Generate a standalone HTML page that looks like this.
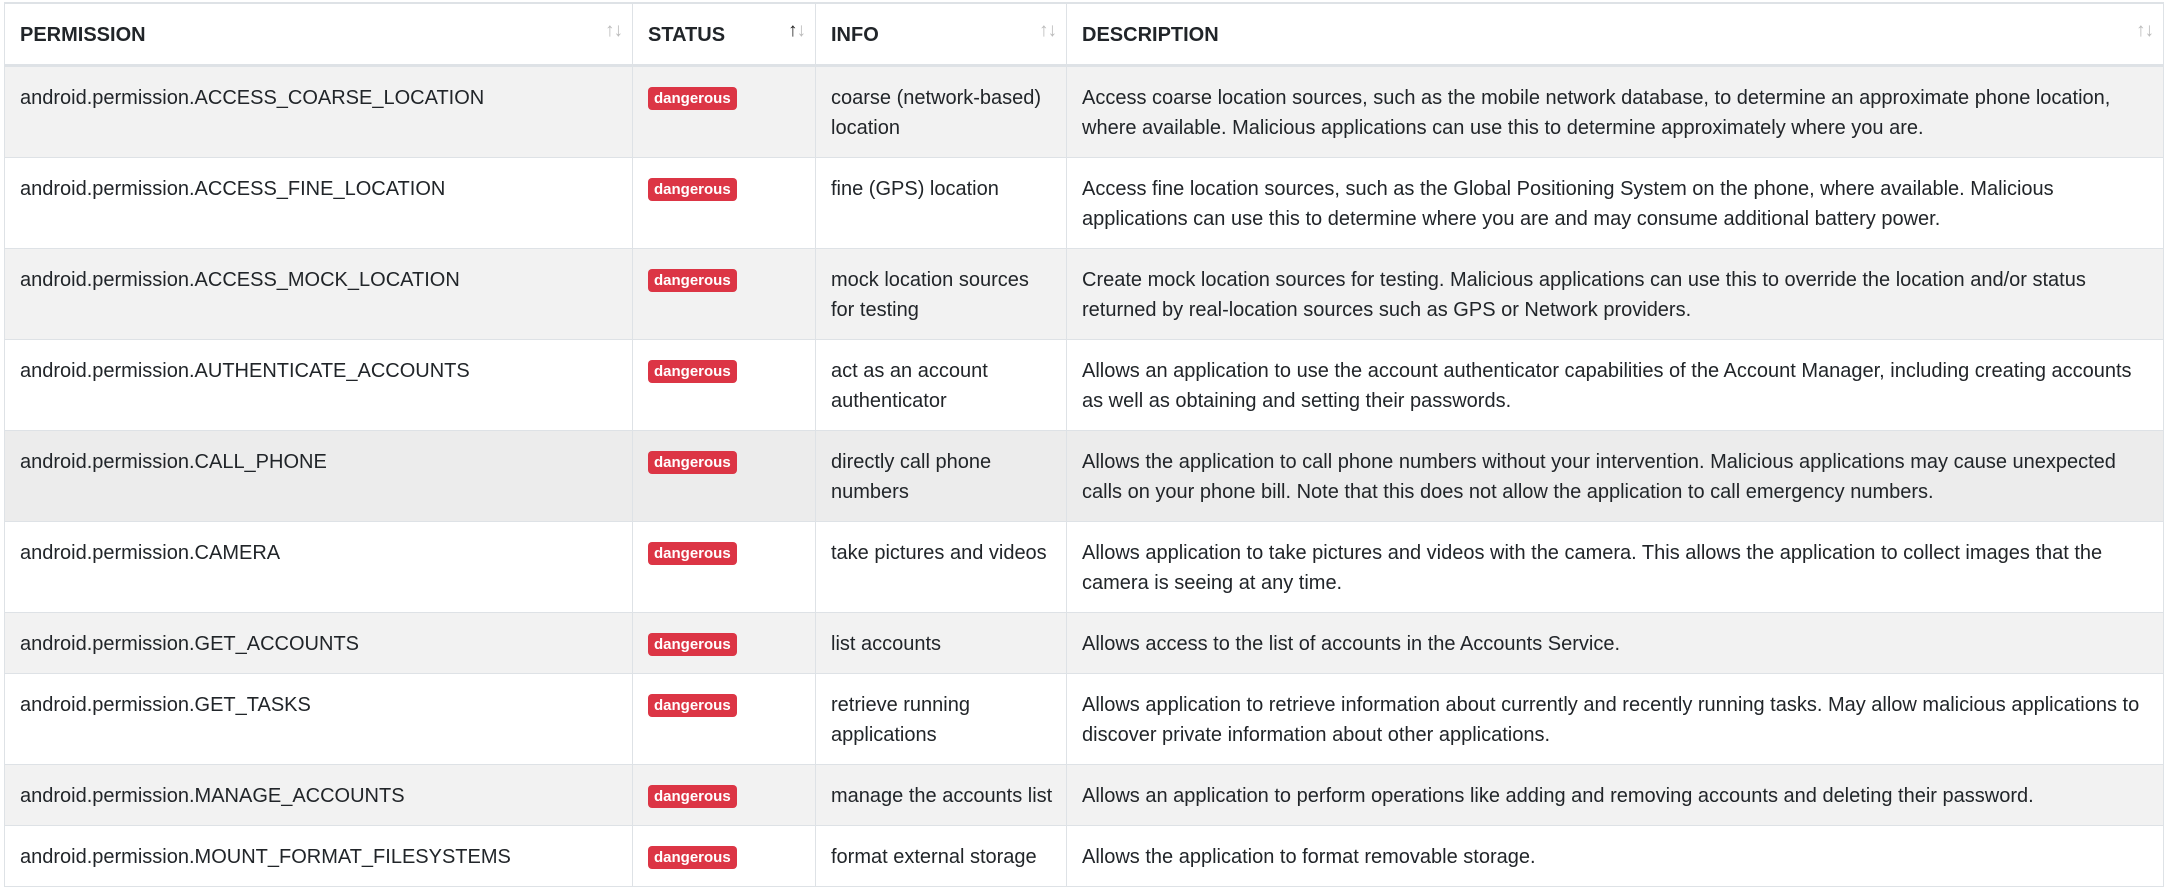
<!DOCTYPE html>
<html><head><meta charset="utf-8"><style>
html,body{margin:0;padding:0;background:#fff;width:2169px;height:889px;overflow:hidden}
body{font-family:"Liberation Sans",Arial,sans-serif;color:#212529;font-size:20px;line-height:30px}
table{position:absolute;left:4px;top:2px;border-collapse:collapse;table-layout:fixed;width:2159px}
th,td{border:1px solid #dee2e6;padding:16px 10px 14px 15px;vertical-align:top;text-align:left}
table{border-top:2px solid #dee2e6}
th{font-weight:bold;height:28px;padding:16px 15px 14px;position:relative;border-bottom:3px solid #dee2e6;}
th .s{position:absolute;right:10px;top:12px;font-size:19px;color:#bbb;font-weight:normal;letter-spacing:-1px}
th .s b{font-weight:normal;color:#222}
tbody tr:nth-child(odd) td{background:#f2f2f2}
tbody tr.h td{background:#ececec}
.b{display:inline-block;background:#dc3545;color:#fff;font-weight:bold;font-size:15px;line-height:23px;padding:0 6px;border-radius:4px;margin-top:4px;vertical-align:top}
</style></head><body>
<table>
<colgroup><col style="width:628px"><col style="width:183px"><col style="width:251px"><col style="width:1097px"></colgroup>
<thead><tr><th>PERMISSION<span class="s">↑↓</span></th><th>STATUS<span class="s"><b>↑</b>↓</span></th><th>INFO<span class="s">↑↓</span></th><th>DESCRIPTION<span class="s">↑↓</span></th></tr></thead>
<tbody>
<tr><td>android.permission.ACCESS_COARSE_LOCATION</td><td><span class="b">dangerous</span></td><td>coarse (network-based) location</td><td>Access coarse location sources, such as the mobile network database, to determine an approximate phone location, where available. Malicious applications can use this to determine approximately where you are.</td></tr>
<tr><td>android.permission.ACCESS_FINE_LOCATION</td><td><span class="b">dangerous</span></td><td>fine (GPS) location</td><td>Access fine location sources, such as the Global Positioning System on the phone, where available. Malicious applications can use this to determine where you are and may consume additional battery power.</td></tr>
<tr><td>android.permission.ACCESS_MOCK_LOCATION</td><td><span class="b">dangerous</span></td><td>mock location sources for testing</td><td>Create mock location sources for testing. Malicious applications can use this to override the location and/or status returned by real-location sources such as GPS or Network providers.</td></tr>
<tr><td>android.permission.AUTHENTICATE_ACCOUNTS</td><td><span class="b">dangerous</span></td><td>act as an account authenticator</td><td>Allows an application to use the account authenticator capabilities of the Account Manager, including creating accounts as well as obtaining and setting their passwords.</td></tr>
<tr class="h"><td>android.permission.CALL_PHONE</td><td><span class="b">dangerous</span></td><td>directly call phone numbers</td><td>Allows the application to call phone numbers without your intervention. Malicious applications may cause unexpected calls on your phone bill. Note that this does not allow the application to call emergency numbers.</td></tr>
<tr><td>android.permission.CAMERA</td><td><span class="b">dangerous</span></td><td>take pictures and videos</td><td>Allows application to take pictures and videos with the camera. This allows the application to collect images that the camera is seeing at any time.</td></tr>
<tr><td>android.permission.GET_ACCOUNTS</td><td><span class="b">dangerous</span></td><td>list accounts</td><td>Allows access to the list of accounts in the Accounts Service.</td></tr>
<tr><td>android.permission.GET_TASKS</td><td><span class="b">dangerous</span></td><td>retrieve running applications</td><td>Allows application to retrieve information about currently and recently running tasks. May allow malicious applications to discover private information about other applications.</td></tr>
<tr><td>android.permission.MANAGE_ACCOUNTS</td><td><span class="b">dangerous</span></td><td>manage the accounts list</td><td>Allows an application to perform operations like adding and removing accounts and deleting their password.</td></tr>
<tr><td>android.permission.MOUNT_FORMAT_FILESYSTEMS</td><td><span class="b">dangerous</span></td><td>format external storage</td><td>Allows the application to format removable storage.</td></tr>
</tbody></table>
</body></html>
